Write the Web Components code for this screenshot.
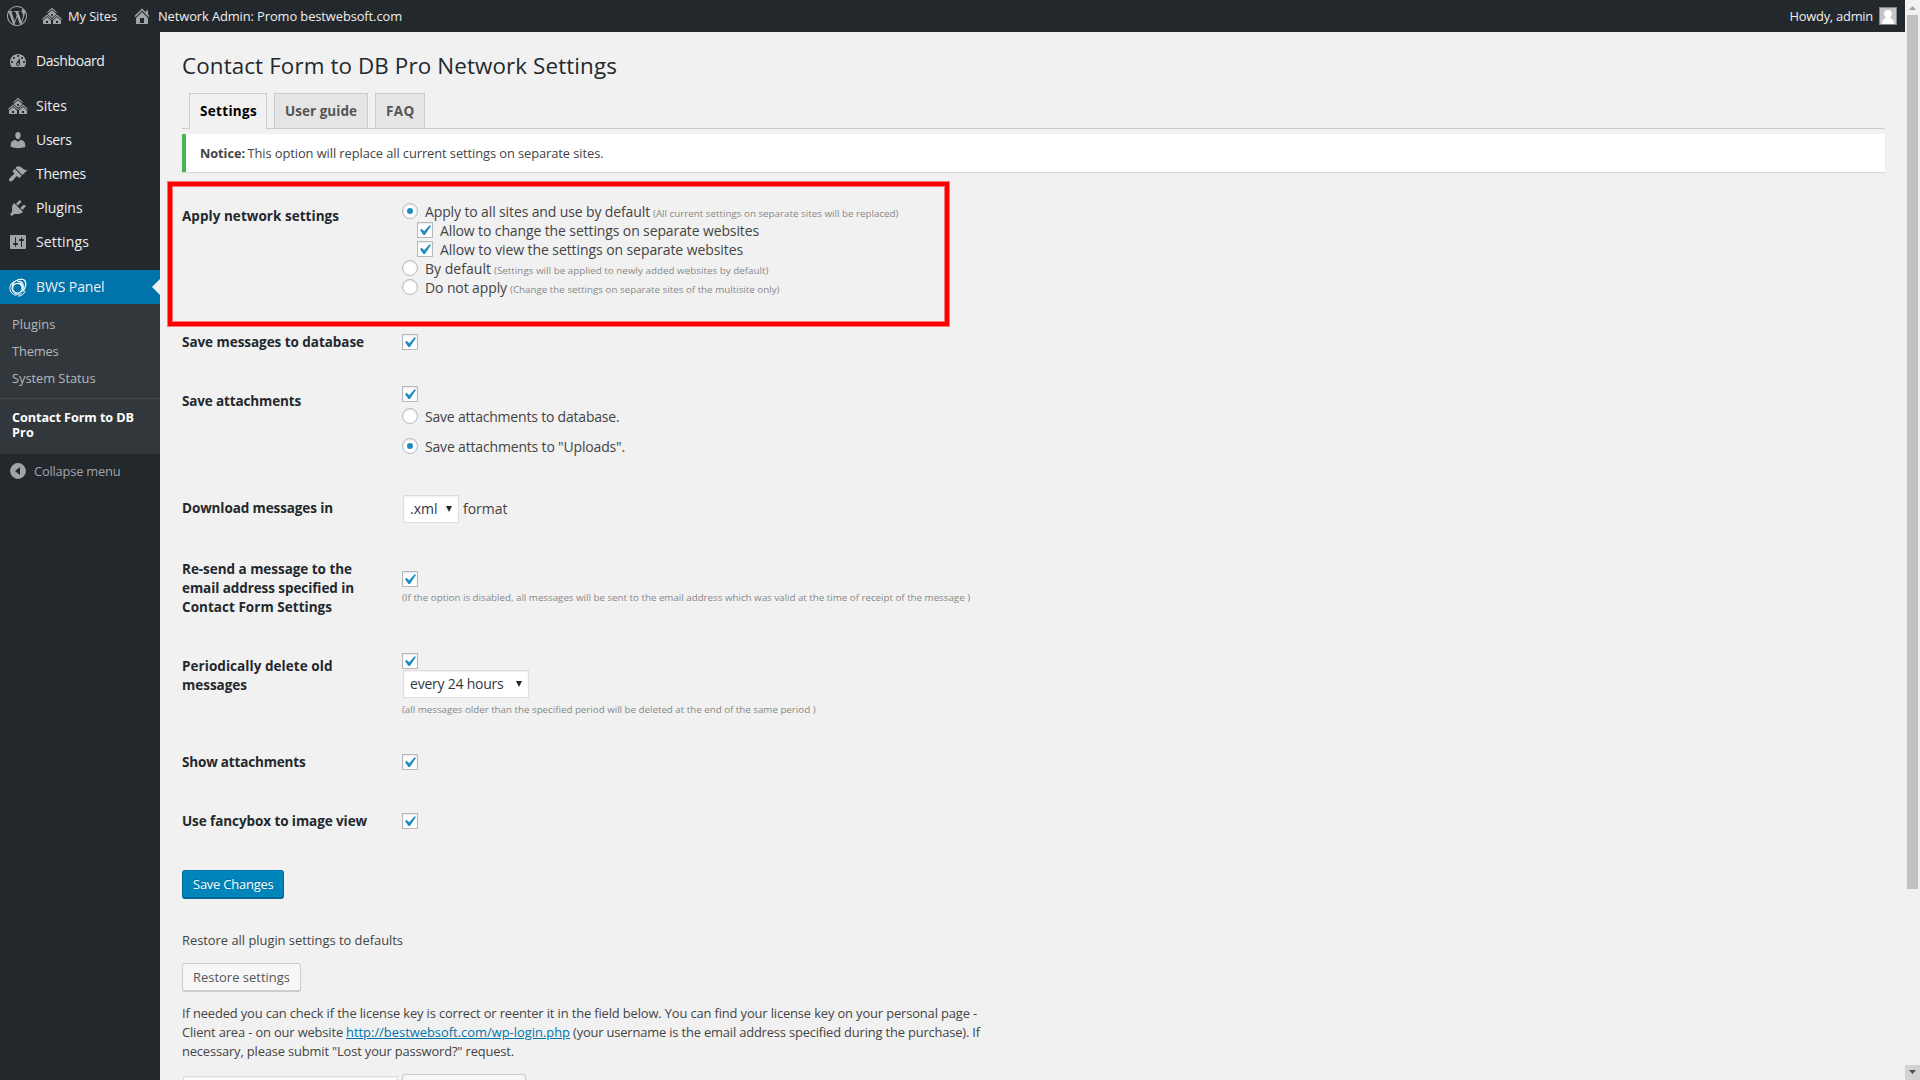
<!DOCTYPE html>
<html lang="en">
<head>
<meta charset="utf-8">
<title>Contact Form to DB Pro Network Settings</title>
<style>
html,body{margin:0;height:1080px;overflow:hidden;background:#f1f1f1;font-family:"Open Sans","Noto Sans",sans-serif;color:#444;font-size:14px}
</style>
</head>
<body>
<wp-page></wp-page>
<script>
const ICONS = {
  multisite:'M14.27 6.87L10 3.14 5.73 6.87 5 6.14l5-4.38 5 4.38zM14 8.42l-4.05 3.43L6 8.38v-.74l4-3.5 4 3.5v.78zM11 9.7V8H9v1.7h2zm-1.73 4.03L5 10 .73 13.73 0 13l5-4.38L10 13zm10 0L15 10l-4.27 3.73L10 13l5-4.38L20 13zM5 11l4 3.5V18H1v-3.5zm10 0l4 3.5V18h-8v-3.5zm-9 6v-2H4v2h2zm10 0v-2h-2v2h2z',
  home:'M16 8.5l1.53 1.53-1.06 1.06L10 4.6l-6.47 6.49-1.06-1.06L10 2.5l4 4v-2h2v4zm-6-2.46l6 5.99V18H4v-5.97zM12 17v-5H8v5h4z',
  dashboard:'M3.76 16h12.48c1.1-1.37 1.76-3.11 1.76-5 0-4.42-3.58-8-8-8s-8 3.58-8 8c0 1.89.66 3.63 1.76 5zM10 4c.55 0 1 .45 1 1s-.45 1-1 1-1-.45-1-1 .45-1 1-1zM6 6c.55 0 1 .45 1 1s-.45 1-1 1-1-.45-1-1 .45-1 1-1zm8 0c.55 0 1 .45 1 1s-.45 1-1 1-1-.45-1-1 .45-1 1-1zm-5.37 5.55L12 7v6c0 1.1-.9 2-2 2s-2-.9-2-2c0-.57.24-1.08.63-1.45zM4 10c.55 0 1 .45 1 1s-.45 1-1 1-1-.45-1-1 .45-1 1-1zm12 0c.55 0 1 .45 1 1s-.45 1-1 1-1-.45-1-1 .45-1 1-1zm-5 3c0-.55-.45-1-1-1s-1 .45-1 1 .45 1 1 1 1-.45 1-1z',
  users:'M10 9.25c-2.27 0-2.73-3.44-2.73-3.44C7 4.02 7.82 2 9.97 2c2.16 0 2.98 2.02 2.71 3.81 0 0-.41 3.44-2.68 3.44zm0 2.57L12.72 10c2.39 0 4.52 2.33 4.52 4.53v2.49s-3.65 1.13-7.24 1.13c-3.65 0-7.24-1.13-7.24-1.13v-2.49c0-2.25 1.94-4.48 4.47-4.48z',
  themes:'M14.48 11.06L7.41 3.99l1.5-1.5c.5-.56 2.3-.47 3.51.32 1.21.8 1.43 1.28 2.91 2.1 1.18.64 2.45 1.26 4.45.85zm-.71.71L6.7 4.7 4.93 6.47c-.39.39-.39 1.02 0 1.41l1.06 1.06c.39.39.39 1.03 0 1.42-.6.6-1.43 1.11-2.21 1.69-.35.26-.7.53-1.01.84C1.43 14.23.4 16.08 1.4 17.07c.99 1 2.84-.03 4.18-1.36.31-.31.58-.66.85-1.02.57-.78 1.08-1.61 1.69-2.21.39-.39 1.02-.39 1.41 0l1.06 1.06c.39.39 1.02.39 1.41 0z',
  plugins:'M13.11 4.36L9.87 7.6 8 5.73l3.24-3.24c.35-.34 1.05-.2 1.56.32.52.51.66 1.21.31 1.55zm-8 1.77l.91-1.12 9.01 9.01-1.19.84c-.71.71-2.63 1.16-3.82 1.16H6.14L4.9 17.26c-.59.59-1.54.59-2.12 0-.59-.58-.59-1.53 0-2.12l1.24-1.24v-3.88c0-1.13.4-3.19 1.09-3.89zm7.26 3.97l3.24-3.24c.34-.35 1.04-.21 1.55.31.52.51.66 1.21.31 1.55l-3.24 3.25z',
  settings:'M18 16V4c0-.55-.45-1-1-1H3c-.55 0-1 .45-1 1v12c0 .55.45 1 1 1h14c.55 0 1-.45 1-1zM8 11h1c.55 0 1 .45 1 1s-.45 1-1 1H8v1.5c0 .28-.22.5-.5.5s-.5-.22-.5-.5V13H6c-.55 0-1-.45-1-1s.45-1 1-1h1V5.5c0-.28.22-.5.5-.5s.5.22.5.5V11zm5-2h-1c-.55 0-1-.45-1-1s.45-1 1-1h1V5.5c0-.28.22-.5.5-.5s.5.22.5.5V7h1c.55 0 1 .45 1 1s-.45 1-1 1h-1v5.5c0 .28-.22.5-.5.5s-.5-.22-.5-.5V9z',
  collapse:'M10 2.1a7.9 7.9 0 1 0 0 15.8a7.9 7.9 0 0 0 0-15.8zM12 6v8l-5-4z'
};
const WP_LOGO='M21.469 6.825c.84 1.537 1.318 3.3 1.318 5.175 0 3.979-2.156 7.456-5.363 9.325l3.295-9.527c.615-1.54.82-2.771.82-3.864 0-.405-.026-.78-.07-1.11m-7.981.105c.647-.03 1.232-.105 1.232-.105.582-.075.514-.93-.067-.899 0 0-1.755.135-2.88.135-1.064 0-2.85-.15-2.85-.15-.585-.03-.661.855-.075.885 0 0 .54.061 1.125.09l1.68 4.605-2.37 7.08L5.354 6.9c.649-.03 1.234-.1 1.234-.1.585-.075.516-.93-.065-.896 0 0-1.746.138-2.874.138-.2 0-.438-.008-.69-.015C4.911 3.15 8.235 1.215 12 1.215c2.809 0 5.365 1.072 7.286 2.833-.046-.003-.091-.009-.141-.009-1.06 0-1.812.923-1.812 1.914 0 .89.513 1.643 1.06 2.531.411.72.89 1.643.89 2.977 0 .915-.354 1.994-.821 3.479l-1.075 3.585-3.9-11.61.001.014zM12 22.784c-1.059 0-2.081-.153-3.048-.437l3.237-9.406 3.315 9.087c.024.053.05.101.078.149-1.12.393-2.325.609-3.582.609M1.211 12c0-1.564.336-3.05.935-4.39L7.29 21.709C3.694 19.96 1.212 16.271 1.211 12M12 0C5.385 0 0 5.385 0 12s5.385 12 12 12 12-5.385 12-12S18.615 0 12 0';

function define(name, render, after) {
  customElements.define(name, class extends HTMLElement {
    connectedCallback() {
      if (this.shadowRoot) return;
      this.attachShadow({mode:'open'}).innerHTML = render(this);
      if (after) after(this);
    }
  });
}

/* One line of text, tracked so that it spans the width given in "w". */
define('fit-text', () => `<style>
  :host{display:block;flex:none;white-space:nowrap;line-height:19px}
  :host([b]){font-weight:700;font-size:13.5px;color:var(--bold,#23282d)}
  :host([sm]){font-size:9.8px;color:#888}
  :host([p]){font-size:12.9px}
  :host([b][p]){font-size:12.7px}
  span{display:inline-block;white-space:pre}
  :host([link]) span{color:#0073aa;text-decoration:underline}
  </style><span><slot></slot></span>`, el => {
  const w = +el.getAttribute('w'), span = el.shadowRoot.querySelector('span');
  const n = span.getBoundingClientRect().width;
  if (n) span.style.letterSpacing = ((w - n) / el.textContent.length).toFixed(4) + 'px';
  el.style.width = w + 'px';
});

define('wp-icon', el => {
  const n = el.getAttribute('name');
  let svg;
  if (n === 'wordpress') svg = `<svg viewBox="0 0 24 24"><path d="${WP_LOGO}"/></svg>`;
  else if (n === 'bws') svg = `<svg viewBox="0 0 20 20"><g fill="none" stroke="#fff">
    <circle cx="9.400" cy="11.200" r="4.900" stroke-width="1.300"/>
    <path d="M6.500 4.500C3 6 1.300 9.500 2 12.700C2.700 16 5.500 18 8.500 18.200" stroke-width="1"/>
    <path d="M3.500 8C6 4.500 10 2.300 13.500 2.400" stroke-width="1.200"/>
    <path d="M6.200 5.800C3.600 8 3.300 12.500 5.500 15.200C7.500 17.400 11 17.900 13.500 16.600" stroke-width="1"/>
    <path d="M10 19.100C13 19.300 16 17 17.300 14" stroke-width="1"/></g>
    <path fill="#fff" d="M8.500 3.700C11 1.300 15.500.8 17.300 3.200C19.600 6.200 18 12.500 14.200 15.800C15.500 12.500 15.600 8.500 13.500 6.300C12.200 4.900 10.500 4.700 8.300 5.200C10.500 3.600 13.600 3.600 15 6.100C16.200 8.200 16 10.500 15.600 12.200C17.200 9 17.600 5.700 16.200 3.900C14.700 2.200 11.500 2.300 8.500 3.700z"/>
    <path fill="#fff" d="M11.500 5.400C14 6 15.200 8.300 14.900 11.200C14.800 13 14.200 14.600 13.200 15.800C14 13.500 14.200 11.700 13.700 9.700C13.300 7.900 12.300 6.600 10.200 5.900z"/></svg>`;
  else svg = `<svg viewBox="0 0 20 20"><path fill-rule="evenodd" d="${ICONS[n]}"/></svg>`;
  return `<style>:host{display:block;flex:none;width:20px;height:20px}svg{display:block;width:100%;height:100%;fill:currentColor}</style>${svg}`;
});

define('wp-check', el => `<style>
  :host{display:block;flex:none;box-sizing:border-box;width:16px;height:16px;border:1px solid #b4b9be;background:#fff;box-shadow:inset 0 1px 2px rgba(0,0,0,.1)}
  svg{display:block;width:21px;height:21px;margin:-3px 0 0 -4px;fill:#1e8cbe}
  </style><svg viewBox="0 0 20 20"><path d="M14.83 4.89l1.34.94-5.81 8.38H9.02L5.78 9.67l1.34-1.25 2.57 2.4z"/></svg>`);

define('wp-radio', el => `<style>
  :host{display:grid;place-items:center;flex:none;box-sizing:border-box;width:16px;height:16px;border:1px solid #b4b9be;border-radius:50%;background:#fff;box-shadow:inset 0 1px 2px rgba(0,0,0,.1)}
  i{width:6px;height:6px;border-radius:50%;background:#1e8cbe}
  </style>${el.hasAttribute('on') ? '<i></i>' : ''}`);

define('wp-select', el => `<style>
  :host{display:flex;flex:none;box-sizing:border-box;justify-content:space-between;height:28px;padding:3px 6px 0 6px;margin-left:1px;border:1px solid #ddd;background:#fff;color:#32373c;box-shadow:inset 0 1px 2px rgba(0,0,0,.07)}
  svg{width:6px;height:6px;margin-top:7px;fill:#23282d}
  </style><slot></slot><svg viewBox="0 0 6 6"><path d="M0 0h6L3 6z"/></svg>`);

/* A line of the form: a control and the texts behind it. */
define('opt-line', () => `<style>
  :host{display:flex;height:19px}
  ::slotted(fit-text){margin-top:-1px}
  ::slotted(fit-text[sm]){margin-top:1px}
  </style><slot></slot>`);

define('form-row', () => `<style>
  :host{display:grid;grid-template-columns:220px 1fr;box-sizing:border-box}
  .l{padding-top:calc(var(--l) + 1px)} .c{padding-top:var(--c)}
  </style><div class="l"><slot name="label"></slot></div><div class="c"><slot></slot></div>`);

define('wp-button', () => `<style>
  :host{display:flex;flex:none;box-sizing:border-box;height:29px;padding:4px 0 0 10px;border:1px solid #ccc;border-bottom-width:2px;border-radius:3px;background:#f7f7f7;color:#555}
  :host([primary]){background:#0085ba;border-color:#0073aa #006799 #006799;color:#fff;text-shadow:0 -1px 1px #006799}
  </style><slot></slot>`);

define('admin-bar', () => `<style>
  :host{display:flex;height:32px;background:#23282d;color:#a0a5aa;box-sizing:border-box;padding:6px 8px 0 7px}
  fit-text{color:#eee;margin-top:1px}
  .sp{flex:1}
  .av{box-sizing:border-box;width:18px;height:18px;border:1px solid #82878c;background:#c6c6c6;margin:1px 0 0 6px;flex:none}
  .av svg{display:block;width:16px;height:16px}
  </style>
  <wp-icon name="wordpress"></wp-icon>
  <wp-icon name="multisite" style="margin-left:15px"></wp-icon>
  <fit-text p w="49" style="margin-left:6px">My Sites</fit-text>
  <wp-icon name="home" style="margin-left:15px"></wp-icon>
  <fit-text p w="244" style="margin-left:6px">Network Admin: Promo bestwebsoft.com</fit-text>
  <div class="sp"></div>
  <fit-text p w="83.500">Howdy, admin</fit-text>
  <div class="av"><svg viewBox="0 0 16 16" fill="#fff"><circle cx="8" cy="6" r="3.9"/><path d="M2 16c0-4 2.500-6.500 6-6.500s6 2.500 6 6.500z"/></svg></div>`);

define('menu-item', el => `<style>
  :host{display:flex;height:34px;position:relative;color:#a0a5aa;box-sizing:border-box;padding:7px 0 0 8px}
  ::slotted(fit-text){color:#eee;margin:0 0 0 8px}
  :host([on]){background:#0073aa}
  :host([on])::after{content:"";position:absolute;right:0;top:9px;border:8px solid transparent;border-left:0;border-right-color:#f1f1f1}
  </style><wp-icon name="${el.getAttribute('icon')}"></wp-icon><slot></slot>`);

define('admin-menu', () => `<style>
  :host{display:block;width:160px;background:#23282d;padding-top:12px;flex:none}
  .gap{height:11px}
  .sub{box-sizing:border-box;height:150px;background:#32373c;color:#b4b9be;padding-top:11px}
  .sub fit-text{height:27px;margin-left:12px}
  hr{border:0;border-top:1px solid #464a4e;margin:2px 0 9px}
  .sub .cur{--bold:#fff;height:15px}
  .col{display:flex;color:#a0a5aa;padding:7px 0 0 8px}
  </style>
  <menu-item icon="dashboard"><fit-text w="68.500">Dashboard</fit-text></menu-item>
  <div class="gap"></div>
  <menu-item icon="multisite"><fit-text w="31">Sites</fit-text></menu-item>
  <menu-item icon="users"><fit-text w="35.500">Users</fit-text></menu-item>
  <menu-item icon="themes"><fit-text w="50">Themes</fit-text></menu-item>
  <menu-item icon="plugins"><fit-text w="46.500">Plugins</fit-text></menu-item>
  <menu-item icon="settings"><fit-text w="53">Settings</fit-text></menu-item>
  <div class="gap"></div>
  <menu-item icon="bws" on><fit-text w="68.500">BWS Panel</fit-text></menu-item>
  <div class="sub">
    <fit-text p w="43.500">Plugins</fit-text><fit-text p w="46.500">Themes</fit-text><fit-text p w="83.500">System Status</fit-text>
    <hr>
    <fit-text p b class="cur" w="122">Contact Form to DB</fit-text><fit-text p b class="cur" w="22">Pro</fit-text>
  </div>
  <div class="col"><wp-icon name="collapse"></wp-icon><fit-text p w="86.500" style="margin:1px 0 0 6px">Collapse menu</fit-text></div>`);

define('nav-tabs', () => `<style>
  :host{display:flex;align-items:flex-end;height:35px;border-bottom:1px solid #ccc;padding-left:7px;gap:7px}
  div{box-sizing:border-box;height:35px;border:1px solid #ccc;border-bottom:0;background:#e5e5e5;padding:8px 0 0 10px;--bold:#555}
  .on{height:36px;margin-bottom:-1px;background:#f1f1f1;--bold:#000;position:relative}
  </style>
  <div class="on" style="width:78px"><fit-text b w="57">Settings</fit-text></div>
  <div style="width:94px"><fit-text b w="72">User guide</fit-text></div>
  <div style="width:50px"><fit-text b w="28.500">FAQ</fit-text></div>`);

define('wp-notice', () => `<style>
  :host{display:flex;box-sizing:border-box;height:38px;margin-top:5px;border-left:4px solid #46b450;background:#fff;box-shadow:0 1px 1px rgba(0,0,0,.1);padding:10px 0 0 14px;--bold:#444}
  </style><fit-text p b w="45">Notice:</fit-text><fit-text p w="356" style="margin-left:2.500px">This option will replace all current settings on separate sites.</fit-text>`);

define('settings-form', () => `<style>
  :host{display:block;position:relative;padding-top:9px}
  .mark{position:absolute;left:-15px;top:9px;width:783px;height:146px;box-sizing:border-box;border:1px solid rgba(255,0,0,.5)}
  .mark::before{content:"";position:absolute;inset:0;border:4px solid #f00}
  .mark::after{content:"";position:absolute;inset:4px;border:1px solid rgba(255,0,0,.5)}
  .t{margin-left:7px}.s{margin-left:3px}
  </style>
  <form-row style="height:146px;--l:25px;--c:22px"><fit-text slot="label" b w="157">Apply network settings</fit-text>
    <opt-line><wp-radio on></wp-radio><fit-text class="t" w="225">Apply to all sites and use by default</fit-text><fit-text sm class="s" w="245.500">(All current settings on separate sites will be replaced)</fit-text></opt-line>
    <opt-line style="padding-left:15px"><wp-check></wp-check><fit-text class="t" w="319">Allow to change the settings on separate websites</fit-text></opt-line>
    <opt-line style="padding-left:15px"><wp-check></wp-check><fit-text class="t" w="303">Allow to view the settings on separate websites</fit-text></opt-line>
    <opt-line><wp-radio></wp-radio><fit-text class="t" w="66">By default</fit-text><fit-text sm class="s" w="274.500">(Settings will be applied to newly added websites by default)</fit-text></opt-line>
    <opt-line><wp-radio></wp-radio><fit-text class="t" w="82">Do not apply</fit-text><fit-text sm class="s" w="269.500">(Change the settings on separate sites of the multisite only)</fit-text></opt-line>
  </form-row>
  <form-row style="height:49px;--l:5px;--c:7px"><fit-text slot="label" b w="182">Save messages to database</fit-text><wp-check></wp-check></form-row>
  <form-row style="height:110px;--l:15px;--c:10px"><fit-text slot="label" b w="119">Save attachments</fit-text>
    <wp-check></wp-check>
    <opt-line style="margin-top:6px"><wp-radio></wp-radio><fit-text class="t" w="194.500">Save attachments to database.</fit-text></opt-line>
    <opt-line style="margin-top:11px"><wp-radio on></wp-radio><fit-text class="t" w="200">Save attachments to "Uploads".</fit-text></opt-line>
  </form-row>
  <form-row style="height:64px;--l:12px;--c:9px"><fit-text slot="label" b w="151">Download messages in</fit-text>
    <div style="display:flex"><wp-select style="width:56px"><fit-text w="27.500">.xml</fit-text></wp-select><fit-text w="44.500" style="margin:4px 0 0 4px">format</fit-text></div>
  </form-row>
  <form-row style="height:90px;--l:9px;--c:21px"><div slot="label"><fit-text b w="170">Re-send a message to the</fit-text><fit-text b w="172">email address specified in</fit-text><fit-text b w="150">Contact Form Settings</fit-text></div>
    <wp-check></wp-check><fit-text sm w="568" style="margin-top:1px">(If the option is disabled, all messages will be sent to the email address which was valid at the time of receipt of the message )</fit-text>
  </form-row>
  <form-row style="height:100px;--l:16px;--c:13px"><div slot="label"><fit-text b w="150.500">Periodically delete old</fit-text><fit-text b w="65">messages</fit-text></div>
    <wp-check></wp-check><wp-select style="width:126px;margin-top:1px"><fit-text w="93.500">every 24 hours</fit-text></wp-select><fit-text sm w="413.500" style="margin-top:2px">(all messages older than the specified period will be deleted at the end of the same period )</fit-text>
  </form-row>
  <form-row style="height:60px;--l:12px;--c:14px"><fit-text slot="label" b w="123.500">Show attachments</fit-text><wp-check></wp-check></form-row>
  <form-row style="height:70px;--l:11px;--c:13px"><fit-text slot="label" b w="185">Use fancybox to image view</fit-text><wp-check></wp-check></form-row>
  <div class="mark"></div>`);

define('license-box', () => `<style>
  :host{display:block}
  .ln{display:flex}
  .in{box-sizing:border-box;width:215px;height:27px;margin:2px 4px 0 1px;border:1px solid #ddd;background:#fff;box-shadow:inset 0 1px 2px rgba(0,0,0,.07)}
  </style>
  <wp-button primary style="width:102px"><fit-text p w="80.500">Save Changes</fit-text></wp-button>
  <fit-text p w="221" style="margin-top:32px">Restore all plugin settings to defaults</fit-text>
  <wp-button style="width:119px;margin-top:13px"><fit-text p w="97">Restore settings</fit-text></wp-button>
  <fit-text p w="795" style="margin-top:12px">If needed you can check if the license key is correct or reenter it in the field below. You can find your license key on your personal page -</fit-text>
  <div class="ln"><fit-text p w="161">Client area - on our website</fit-text><fit-text p link w="224" style="margin-left:3px">http://bestwebsoft.com/wp-login.php</fit-text><fit-text p w="407" style="margin-left:3px">(your username is the email address specified during the purchase). If</fit-text></div>
  <fit-text p w="332">necessary, please submit "Lost your password?" request.</fit-text>
  <div class="ln" style="margin-top:13px"><div class="in"></div><wp-button style="width:124px"></wp-button></div>`);

define('scroll-bar', () => `<style>
  :host{display:flex;flex-direction:column;align-items:center;width:15px;height:1080px;background:#f1f1f1;flex:none}
  svg{display:block;width:15px;height:15px}
  .thumb{width:11px;height:874px;background:#c1c1c1}
  .sp{flex:1}
  </style><svg viewBox="0 0 15 15"><path d="M4 10h7L7.500 6z" fill="#a3a3a3"/></svg><div class="thumb"></div><div class="sp"></div>
  <svg viewBox="0 0 15 15" style="background:#d2d2d2"><path d="M4 5h7L7.500 9z" fill="#505050"/></svg>`);

define('wp-page', () => `<style>
  :host{display:flex;height:1080px;overflow:hidden}
  .main{flex:1;height:1080px;overflow:hidden}
  .body{display:flex;height:1048px}
  .wrap{flex:1;padding:0 20px 0 22px}
  .h{font-size:22.400px;line-height:30px;color:#23282d;padding-top:19px;margin-bottom:12px}
  </style>
  <div class="main"><admin-bar></admin-bar><div class="body"><admin-menu></admin-menu>
  <div class="wrap"><fit-text class="h" w="435">Contact Form to DB Pro Network Settings</fit-text>
  <nav-tabs></nav-tabs><wp-notice></wp-notice><settings-form></settings-form><license-box></license-box></div></div></div>
  <scroll-bar></scroll-bar>`);
</script>
</body>
</html>
